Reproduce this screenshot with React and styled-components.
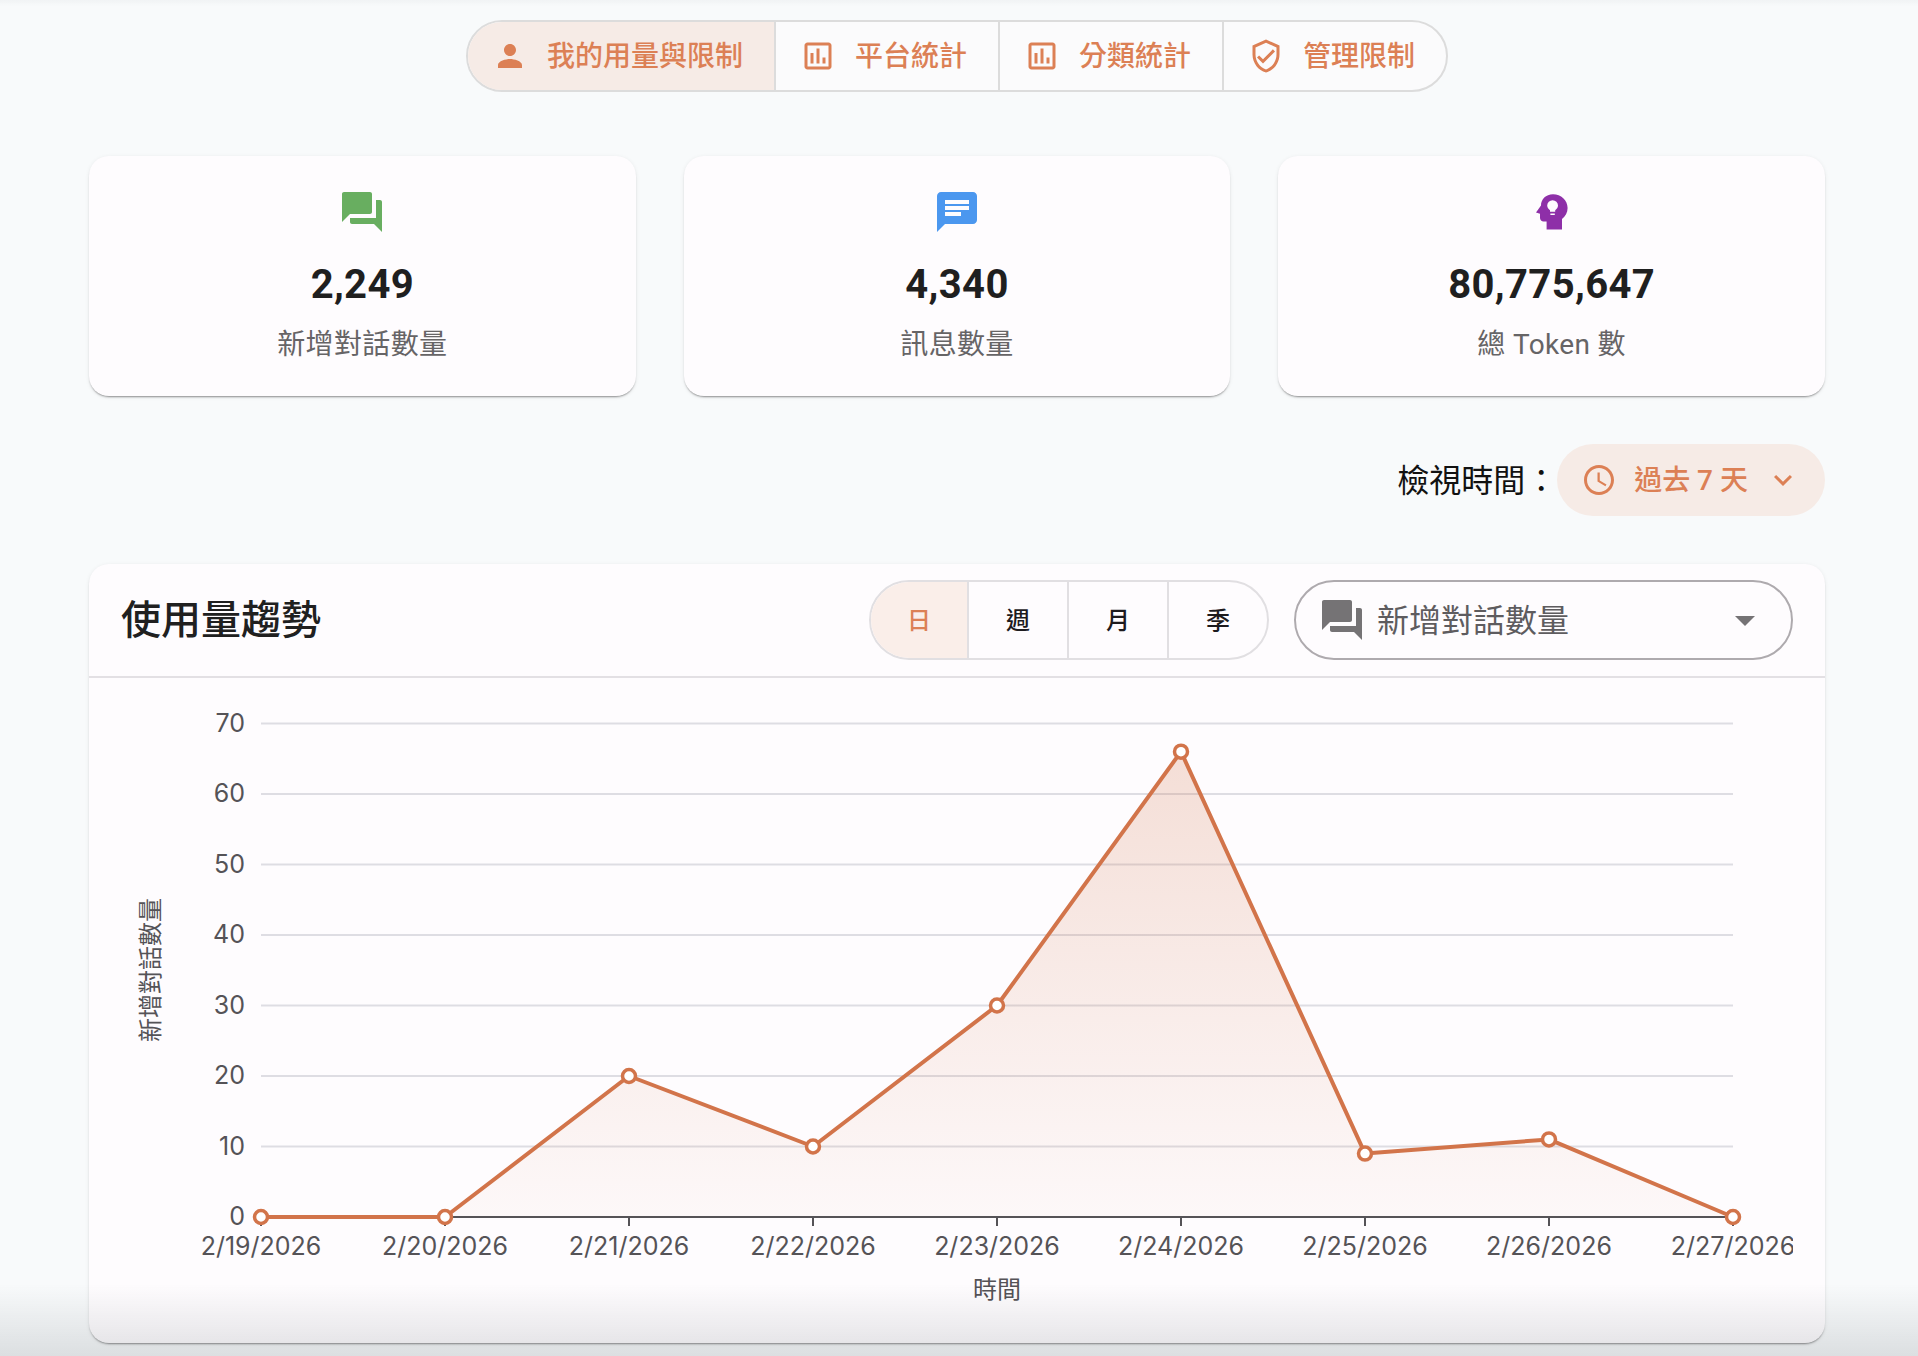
import React from 'react';
import styled, { createGlobalStyle } from 'styled-components';
import {
  MdForum, MdChat, MdPerson, MdOutlineAssessment, MdOutlineVerifiedUser,
  MdAccessTime, MdKeyboardArrowDown, MdArrowDropDown,
} from 'react-icons/md';

const FONT = `Roboto, "Noto Sans CJK TC", sans-serif`;
const CHART_FONT = `Inter, "Noto Sans CJK TC", sans-serif`;
const ORANGE = '#dc8055';
const TINT = '#f6ebe6';

const Global = createGlobalStyle`
  html, body { margin: 0; padding: 0; background: #f8fafb; }
  body { font-family: ${FONT}; height: 1356px; overflow: hidden; }
`;

const Page = styled.main`
  box-sizing: border-box;
  width: 1736px;
  margin-left: 89px;
  padding-top: 20px;
  display: flex;
  flex-direction: column;
`;

const TabBar = styled.nav`
  box-sizing: border-box;
  align-self: center;
  display: flex;
  height: 72px;
  border: 2px solid #dcdcdc;
  border-radius: 36px;
  overflow: hidden;
  background: #fbfbfc;
`;

const Tab = styled.button`
  display: flex;
  align-items: center;
  gap: 19px;
  padding: 0 31px 0 24px;
  height: 100%;
  border: 0;
  border-left: ${(p) => (p.$first ? '0' : '2px solid #dcdcdc')};
  background: ${(p) => (p.$active ? TINT : 'transparent')};
  color: ${ORANGE};
  font: 500 28px/1 ${FONT};
  white-space: nowrap;
`;

const ButtonText = styled.span`
  padding-top: 2px;
`;

const Stats = styled.section`
  margin-top: 64px;
  display: grid;
  grid-template-columns: repeat(3, 1fr);
  gap: 48px;
`;

const StatCard = styled.article`
  box-sizing: border-box;
  height: 240px;
  padding-top: 32px;
  display: flex;
  flex-direction: column;
  align-items: center;
  background: #fefcfe;
  border-radius: 20px;
  box-shadow: 0 2px 2px -1px rgba(0, 0, 0, 0.4), 0 1px 4px rgba(0, 0, 0, 0.08);
`;

const StatIcon = styled.div`
  height: 48px;
  color: ${(p) => p.$color};
  display: flex;
`;

const StatValue = styled.div`
  margin-top: 25px;
  font: 700 40px/48px ${FONT};
  letter-spacing: 0.35px;
  color: #1f1f1f;
`;

const StatLabel = styled.div`
  margin-top: 18px;
  font: 400 28px/36px ${FONT};
  letter-spacing: 0.35px;
  color: #666466;
`;

const FilterRow = styled.div`
  margin-top: 48px;
  display: flex;
  justify-content: flex-end;
  align-items: center;
`;

const FilterLabel = styled.span`
  padding-top: 2px;
  font: 400 32px/1 ${FONT};
  color: #111;
`;

const FilterButton = styled.button`
  height: 72px;
  padding: 0 24px;
  display: flex;
  align-items: center;
  gap: 17px;
  border: 0;
  border-radius: 36px;
  background: ${TINT};
  color: ${ORANGE};
  font: 500 28px/1 ${FONT};
  white-space: nowrap;
`;

const ChartCard = styled.section`
  margin-top: 48px;
  height: 779px;
  display: flex;
  flex-direction: column;
  background: #fefcfe;
  border-radius: 20px;
  box-shadow: 0 2px 2px -1px rgba(0, 0, 0, 0.4), 0 1px 4px rgba(0, 0, 0, 0.08);
  overflow: hidden;
`;

const ChartHeader = styled.header`
  box-sizing: border-box;
  height: 114px;
  padding: 16px 32px 0;
  display: flex;
  align-items: flex-start;
  border-bottom: 2px solid #e3e0e4;
`;

const Title = styled.h2`
  margin: 0;
  flex: 1;
  font: 500 40px/82px ${FONT};
  color: #202020;
`;

const Toggle = styled.div`
  display: flex;
  height: 80px;
  border: 2px solid #e1dfe2;
  border-radius: 40px;
  overflow: hidden;
  box-sizing: border-box;
`;

const ToggleItem = styled.button`
  width: ${(p) => (p.$first ? 96 : 100)}px;
  border: 0;
  padding: 2px 0 0;
  border-left: ${(p) => (p.$active ? '0' : '2px solid #e1dfe2')};
  background: ${(p) => (p.$active ? '#faeee9' : 'transparent')};
  color: ${(p) => (p.$active ? ORANGE : '#1d1b1e')};
  font: 500 24px/1 ${FONT};
`;

const Select = styled.div`
  box-sizing: border-box;
  margin-left: 25px;
  width: 499px;
  height: 80px;
  padding: 0 22px;
  display: flex;
  align-items: center;
  gap: 11px;
  border: 2px solid #aeaaae;
  border-radius: 40px;
  color: #757375;
  font: 400 32px/1 ${FONT};
`;

const SelectText = styled.span`
  flex: 1;
  padding-top: 2px;
  color: #5e5c5f;
`;

const ChartSvg = styled.svg`
  display: block;
  margin-left: 32px;
  flex: none;
`;

const Fade = styled.div`
  position: fixed;
  left: 0;
  right: 0;
  bottom: 0;
  height: 72px;
  pointer-events: none;
  background: linear-gradient(to bottom, rgba(20, 30, 40, 0), rgba(20, 30, 40, 0.12));
`;

const TopFade = styled.div`
  position: fixed;
  left: 0;
  right: 0;
  top: 0;
  height: 6px;
  pointer-events: none;
  background: linear-gradient(to bottom, rgba(20, 30, 40, 0.03), rgba(20, 30, 40, 0));
`;

const HeadBulb = ({ size }) => (
  <svg width={size} height={size} viewBox="0 0 24 24" fill="currentColor">
    <path
      fillRule="evenodd"
      d="M12.5 3.1C8.9 3.1 6.5 5.6 6.5 8.8L4 12.3 6 12.9V15C6 16 6.8 16.7 7.8 16.7H9.3V20.7H17V15.5C18.7 14.2 19.8 12.2 19.8 10 19.8 6 16.5 3.1 12.5 3.1ZM12.3 6.1A2.7 2.7 0 0 1 15 8.8C15 9.9 14.3 10.5 13.6 11.1V11.9H11V11.1C10.3 10.5 9.6 9.9 9.6 8.8A2.7 2.7 0 0 1 12.3 6.1ZM11.2 12.7H13.4V13.5H11.2Z"
    />
  </svg>
);

const TABS = [
  { label: '我的用量與限制', Icon: MdPerson, active: true },
  { label: '平台統計', Icon: MdOutlineAssessment },
  { label: '分類統計', Icon: MdOutlineAssessment },
  { label: '管理限制', Icon: MdOutlineVerifiedUser },
];

const STATS = [
  { value: '2,249', label: '新增對話數量', color: '#68ae60', Icon: MdForum },
  { value: '4,340', label: '訊息數量', color: '#4b97ef', Icon: MdChat },
  { value: '80,775,647', label: '總 Token 數', color: '#8e2fa8', Icon: HeadBulb },
];

const DATES = ['2/19', '2/20', '2/21', '2/22', '2/23', '2/24', '2/25', '2/26', '2/27'];
const VALUES = [0, 0, 20, 10, 30, 66, 9, 11, 0];
const X0 = 261;
const DX = 184;
const Y0 = 1217;
const DY = 7.05;
const px = (i) => X0 + i * DX;
const py = (v) => Y0 - v * DY;

const TICK = { fontFamily: CHART_FONT, fontSize: 25, fill: '#555357' };
const NAME = { fontFamily: CHART_FONT, fontSize: 24, fill: '#555357' };

function Chart() {
  const line = VALUES.map((v, i) => `${px(i)},${py(v)}`).join(' ');
  const area = `${px(0)},${Y0} ${line} ${px(8)},${Y0}`;
  return (
    <ChartSvg width="1672" height="663" viewBox="121 678 1672 663">
      <defs>
        <linearGradient id="area" x1="0" y1="0" x2="0" y2="1">
          <stop offset="0" stopColor="#d2744a" stopOpacity="0.22" />
          <stop offset="1" stopColor="#d2744a" stopOpacity="0.03" />
        </linearGradient>
      </defs>
      {[0, 10, 20, 30, 40, 50, 60, 70].map((v) => (
        <g key={v}>
          {v > 0 && <line x1={X0} x2={px(8)} y1={py(v)} y2={py(v)} stroke="#dedde3" strokeWidth="2" />}
          <text x="245" y={py(v) + 8} textAnchor="end" {...TICK}>{v}</text>
        </g>
      ))}
      <polygon points={area} fill="url(#area)" />
      <line x1={X0} x2={px(8)} y1={Y0} y2={Y0} stroke="#555357" strokeWidth="2" />
      {DATES.map((d, i) => (
        <g key={d}>
          <line x1={px(i)} x2={px(i)} y1={Y0} y2={Y0 + 9} stroke="#555357" strokeWidth="2" />
          <text x={px(i)} y="1255" textAnchor="middle" {...TICK}>{d}/2026</text>
        </g>
      ))}
      <polyline points={line} fill="none" stroke="#d2744a" strokeWidth="4" strokeLinejoin="round" />
      {VALUES.map((v, i) => (
        <circle key={i} cx={px(i)} cy={py(v)} r="6.5" fill="#fff" stroke="#d2744a" strokeWidth="3.5" />
      ))}
      <text x="997" y="1298" textAnchor="middle" {...NAME}>時間</text>
      <text transform="translate(159 970) rotate(-90)" textAnchor="middle" {...NAME}>新增對話數量</text>
    </ChartSvg>
  );
}

export default function App() {
  return (
    <>
      <Global />
      <Page>
        <TabBar>
          {TABS.map(({ label, Icon, active }, i) => (
            <Tab key={label} $active={active} $first={i === 0}>
              <Icon size={36} />
              <ButtonText>{label}</ButtonText>
            </Tab>
          ))}
        </TabBar>

        <Stats>
          {STATS.map(({ value, label, color, Icon }) => (
            <StatCard key={label}>
              <StatIcon $color={color}><Icon size={48} /></StatIcon>
              <StatValue>{value}</StatValue>
              <StatLabel>{label}</StatLabel>
            </StatCard>
          ))}
        </Stats>

        <FilterRow>
          <FilterLabel>檢視時間：</FilterLabel>
          <FilterButton>
            <MdAccessTime size={36} />
            <ButtonText>過去 7 天</ButtonText>
            <MdKeyboardArrowDown size={36} />
          </FilterButton>
        </FilterRow>

        <ChartCard>
          <ChartHeader>
            <Title>使用量趨勢</Title>
            <Toggle>
              <ToggleItem $active $first>日</ToggleItem>
              <ToggleItem>週</ToggleItem>
              <ToggleItem>月</ToggleItem>
              <ToggleItem>季</ToggleItem>
            </Toggle>
            <Select>
              <MdForum size={48} />
              <SelectText>新增對話數量</SelectText>
              <MdArrowDropDown size={48} />
            </Select>
          </ChartHeader>
          <Chart />
        </ChartCard>
      </Page>
      <TopFade />
      <Fade />
    </>
  );
}
